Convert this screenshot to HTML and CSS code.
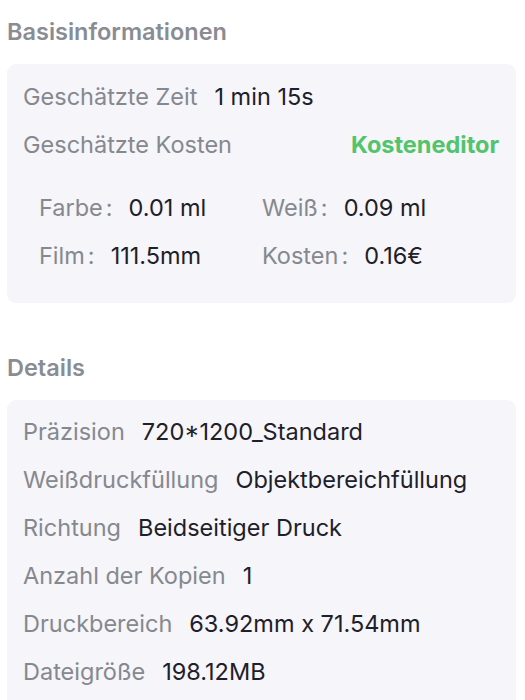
FILE: index.html
```html
<!DOCTYPE html>
<html>
<head>
  <title>Druckinformationen</title>
  <link rel="stylesheet" href="styles.css">
</head>
<body>
<div class="page">
  <div class="section-title">Basisinformationen</div>
  <div class="card card-basic">
    <div class="row">
      <span class="label">Geschätzte Zeit</span>
      <span class="value">1 min 15s</span>
    </div>
    <div class="row">
      <span class="label">Geschätzte Kosten</span>
      <span class="link">Kosteneditor</span>
    </div>
    <div class="cost-grid">
      <div class="cost"><span class="label">Farbe<span class="colon">:</span></span><span class="value">0.01 ml</span></div>
      <div class="cost"><span class="label">Weiß<span class="colon">:</span></span><span class="value">0.09 ml</span></div>
      <div class="cost"><span class="label">Film<span class="colon">:</span></span><span class="value">111.5mm</span></div>
      <div class="cost"><span class="label">Kosten<span class="colon">:</span></span><span class="value">0.16€</span></div>
    </div>
  </div>

  <div class="section-title details-title">Details</div>
  <div class="card card-details">
    <div class="row">
      <span class="label">Präzision</span>
      <span class="value">720*1200_Standard</span>
    </div>
    <div class="row">
      <span class="label">Weißdruckfüllung</span>
      <span class="value">Objektbereichfüllung</span>
    </div>
    <div class="row">
      <span class="label">Richtung</span>
      <span class="value">Beidseitiger Druck</span>
    </div>
    <div class="row">
      <span class="label">Anzahl der Kopien</span>
      <span class="value">1</span>
    </div>
    <div class="row">
      <span class="label">Druckbereich</span>
      <span class="value">63.92mm x 71.54mm</span>
    </div>
    <div class="row">
      <span class="label">Dateigröße</span>
      <span class="value">198.12MB</span>
    </div>
  </div>
</div>
</body>
</html>
```

FILE: styles.css
```css
body {
    margin: 0;
    background-color: #ffffff;
    font-family: Inter, "Noto Sans", sans-serif;
    font-size: 23.5px;
    overflow: hidden;
}

.page {
    padding: 20px 9px 0 7px;
}

.section-title {
    font-size: 23.5px;
    line-height: 24px;
    font-weight: 600;
    color: #8a8c94;
    margin-bottom: 20px;
}

.details-title {
    margin-top: 53px;
}

.card {
    background-color: #f5f5fa;
    border-radius: 9px;
    padding: 8px 17px 24px 16px;
}

.card-details {
    padding-top: 7px;
    padding-bottom: 40px;
}

.row {
    display: flex;
    align-items: center;
    height: 48px;
}

.label {
    color: #86888f;
}

.value {
    color: #1e2029;
    margin-left: 17px;
}

.link {
    margin-left: auto;
    color: #52c46b;
    font-weight: 700;
}

.cost-grid {
    display: grid;
    grid-template-columns: 223px 1fr;
    margin-top: 15px;
    padding-left: 16px;
}

.cost {
    display: flex;
    align-items: center;
    height: 48px;
}

.cost .value {
    margin-left: 16px;
}

.colon {
    margin-left: 3px;
}
```
